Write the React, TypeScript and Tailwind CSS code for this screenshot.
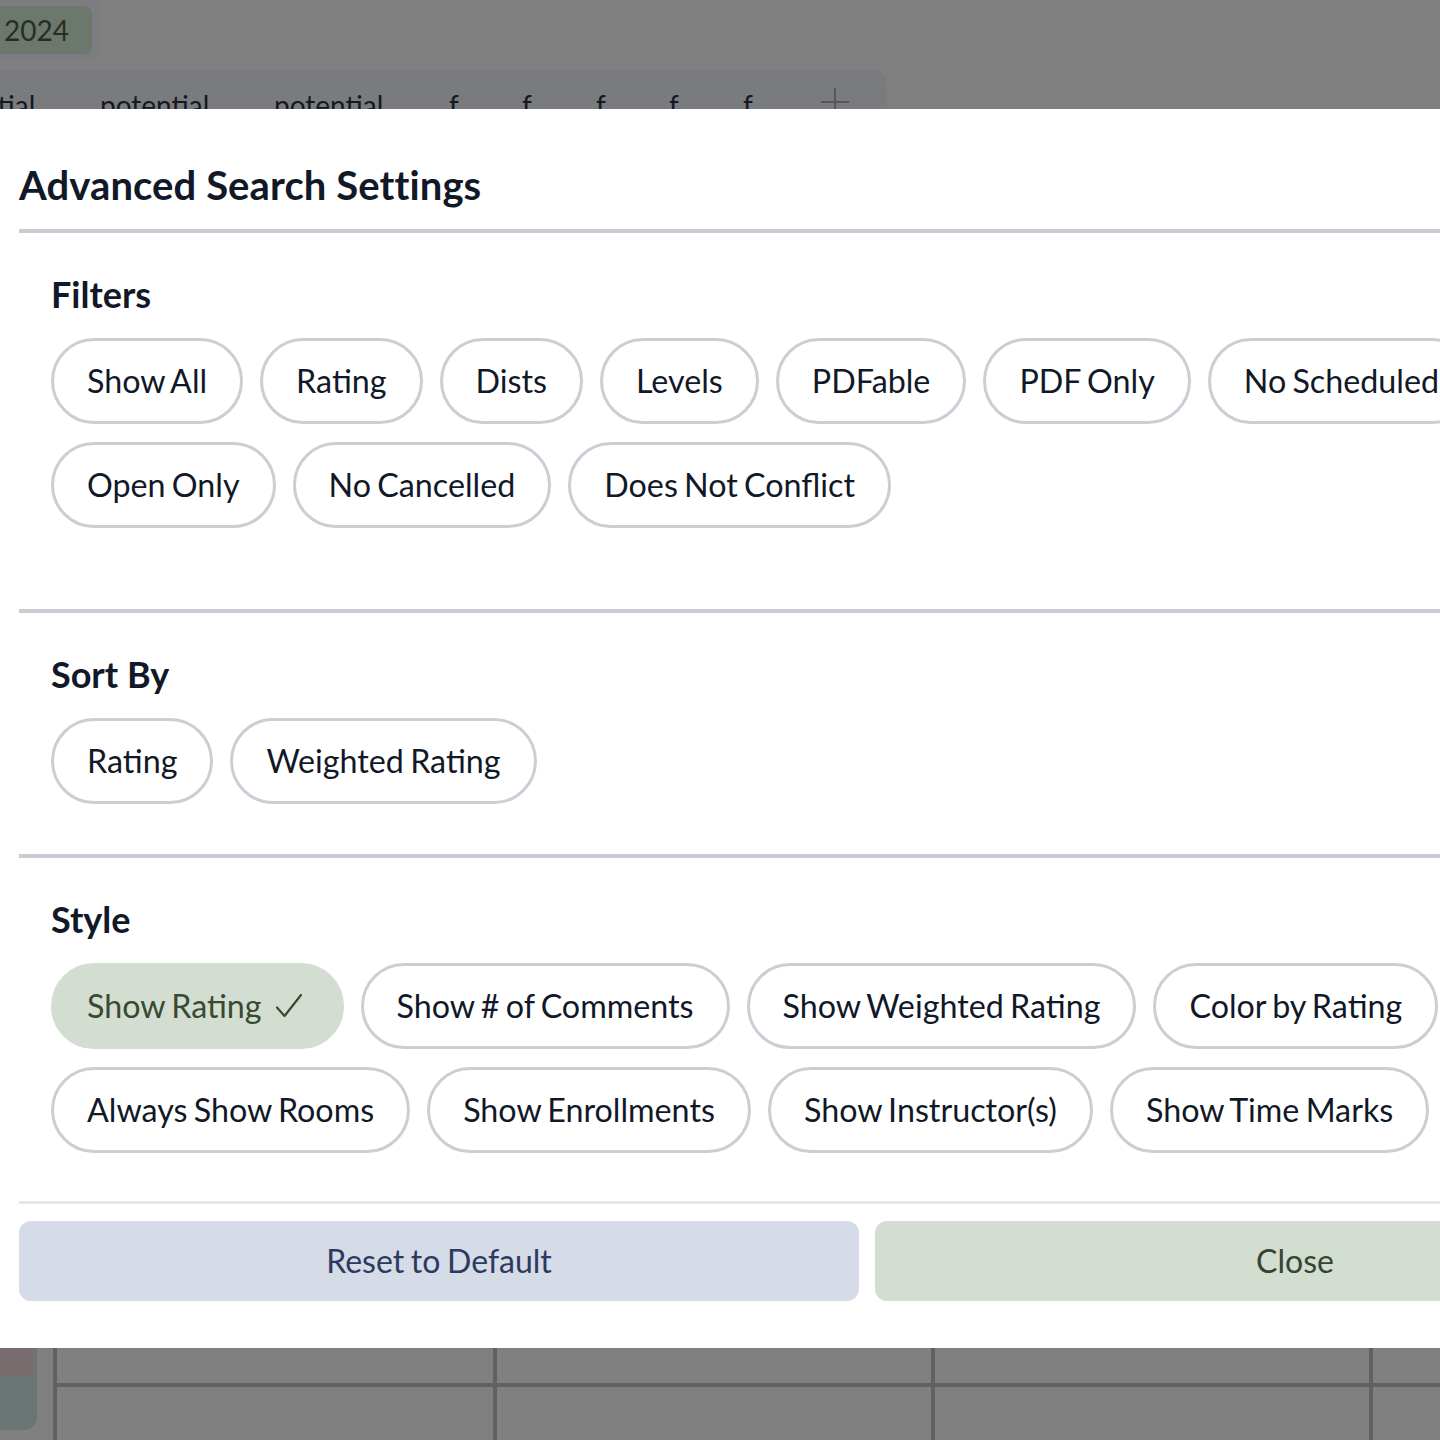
import React from "react";

const filters = ["Show All", "Rating", "Dists", "Levels", "PDFable", "PDF Only", "No Scheduled", "Open Only", "No Cancelled", "Does Not Conflict"];
const sorts = ["Rating", "Weighted Rating"];
const styles = ["Show Rating", "Show # of Comments", "Show Weighted Rating", "Color by Rating", "Always Show Rooms", "Show Enrollments", "Show Instructor(s)", "Show Time Marks"];

function Pill({ label, active }: { label: string; active?: boolean }) {
  if (active) {
    return (
      <button className="flex h-[86px] items-center rounded-full border-[3px] border-[#d3ddd1] bg-[#d3ddd1] pl-[33px] pr-[38px] text-[32.25px] leading-none text-[#384a32] whitespace-nowrap [word-spacing:-2px]">
        <span>{label}</span>
        <svg className="ml-[13px]" width="28" height="26" viewBox="0 0 28 26" fill="none">
          <path d="M2 14.5 L9.5 23 L26 2" stroke="#384a32" strokeWidth="2.2" strokeLinecap="round" strokeLinejoin="round" />
        </svg>
      </button>
    );
  }
  return (
    <button className="h-[86px] rounded-full border-[3px] border-[#cbced4] bg-white px-[33px] text-[32.25px] leading-none text-[#111827] whitespace-nowrap [word-spacing:-2px]">
      {label}
    </button>
  );
}

function Section({ title, items, activeIdx, pb }: { title: string; items: string[]; activeIdx?: number; pb: string }) {
  return (
    <div className={`px-[32px] pt-[39px] ${pb}`}>
      <h3 className="text-[36px] font-bold leading-[44px] text-[#111827]">{title}</h3>
      <div className="mt-[22px] flex flex-wrap gap-x-[17px] gap-y-[18px]">
        {items.map((it, i) => (
          <Pill key={i} label={it} active={i === activeIdx} />
        ))}
      </div>
    </div>
  );
}

export default function App() {
  return (
    <div className="relative h-[1440px] w-[1440px] overflow-hidden bg-[#808080] font-['Lato',sans-serif]">
      {/* background page (dimmed) */}
      <div className="absolute left-0 top-0 h-[60px] w-[100px] rounded-br-[12px] bg-[#7b7d81]">
        <div className="mt-[6px] flex h-[48px] w-[92px] items-center rounded-r-[8px] bg-[#6c786b] pl-[4px] text-[28px] text-[#262e25]">
          2024
        </div>
      </div>
      <div className="absolute left-0 top-[70px] flex h-[80px] w-[887px] items-start rounded-tr-[14px] bg-[#7a7b7f] pt-[14px] text-[28px] text-[#151922]">
        <span className="ml-[-74px] w-[174px] shrink-0">potential</span>
        <span className="w-[174px] shrink-0">potential</span>
        <span className="w-[175px] shrink-0">potential</span>
        <span className="w-[73px] shrink-0">f</span>
        <span className="w-[74px] shrink-0">f</span>
        <span className="w-[73px] shrink-0">f</span>
        <span className="w-[74px] shrink-0">f</span>
        <span className="w-[77px] shrink-0">f</span>
        <svg className="mt-[3px] shrink-0" width="30" height="30" viewBox="0 0 30 30">
          <path d="M15 1 V29 M1 15 H29" stroke="#55575c" strokeWidth="2" />
        </svg>
      </div>
      <div className="absolute left-0 top-[1300px] h-[140px] w-[1440px]">
        <div className="absolute left-0 top-0 h-[130px] w-[37px] overflow-hidden rounded-br-[12px] border-r-[3px] border-[#6f7377]">
          <div className="h-[76px] bg-[#7a6d70]" />
          <div className="h-[60px] bg-[#6b7574]" />
        </div>
        <div className="absolute left-[53px] top-0 h-full w-[4px] bg-[#5f6165]" />
        <div className="absolute left-[493px] top-0 h-full w-[4px] bg-[#5f6165]" />
        <div className="absolute left-[931px] top-0 h-full w-[4px] bg-[#5f6165]" />
        <div className="absolute left-[1369px] top-0 h-full w-[4px] bg-[#5f6165]" />
        <div className="absolute left-[55px] top-[83px] h-[4px] w-[1400px] bg-[#5f6165]" />
      </div>

      {/* modal */}
      <div className="absolute left-0 top-[109px] w-[1734px] bg-white px-[19px] pb-[47px]">
        <h2 className="pt-[52px] text-[40px] font-bold leading-[48px] tracking-[0.1px] text-[#111827]">Advanced Search Settings</h2>
        <div className="mt-[20px] h-[4px] bg-[#c9cdd3]" />
        <Section title="Filters" items={filters} pb="pb-[81px]" />
        <div className="h-[4px] bg-[#c9cdd3]" />
        <Section title="Sort By" items={sorts} pb="pb-[50px]" />
        <div className="h-[4px] bg-[#c9cdd3]" />
        <Section title="Style" items={styles} activeIdx={0} pb="pb-[48px]" />
        <div className="h-[3px] bg-[#e5e7eb]" />
        <div className="mt-[17px] grid grid-cols-2 gap-[16px]">
          <button className="h-[80px] rounded-[12px] bg-[#d6dbe8] text-[32px] text-[#2d3a5e] [word-spacing:-1.5px]">Reset to Default</button>
          <button className="h-[80px] rounded-[12px] bg-[#d3ddd1] text-[32px] text-[#344530]">Close</button>
        </div>
      </div>
    </div>
  );
}
